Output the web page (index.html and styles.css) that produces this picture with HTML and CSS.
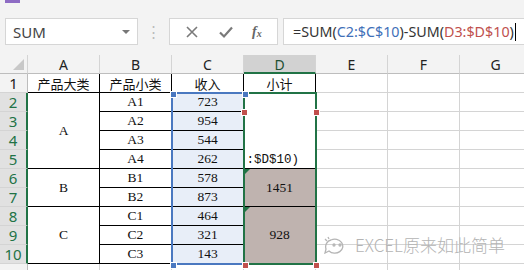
FILE: index.html
```html
<!DOCTYPE html>
<html lang="zh-CN">
<head>
  <meta charset="UTF-8" />
  <title>SUM</title>
  <link rel="stylesheet" href="styles.css">
</head>
<body>
  <div class="app">
    <div class="ribbon-tab"></div>
    <div class="toolbar">
      <div class="namebox">
        <span>SUM</span>
        <span class="caret"></span>
      </div>
      <div class="grip">⋮</div>
      <div class="btns">
        <svg width="14" height="14" viewBox="0 0 14 14"><path d="M2 2 L12 12 M12 2 L2 12" stroke="#7a7a7a" stroke-width="1.6"/></svg>
        <svg width="16" height="14" viewBox="0 0 16 14"><path d="M2 7.5 L6 11.5 L14 2.5" stroke="#7a7a7a" stroke-width="2.2" fill="none"/></svg>
        <span class="fx">f<sub>x</sub></span>
      </div>
      <div class="formula">=SUM(<span class="ref-blue">C2:$C$10</span>)-SUM(<span class="ref-red">D3:$D$10</span>)<span class="cursor"></span></div>
    </div>

    <div class="sheet">
      <div class="corner"><span class="tri"></span></div>
      <div class="colh">A</div>
      <div class="colh">B</div>
      <div class="colh">C</div>
      <div class="colh sel">D</div>
      <div class="colh">E</div>
      <div class="colh">F</div>
      <div class="colh">G</div>

      <div class="rowh">1</div>
      <div class="cell t zh">产品大类</div>
      <div class="cell t zh">产品小类</div>
      <div class="cell t zh">收入</div>
      <div class="cell t zh">小计</div>
      <div class="cell"></div><div class="cell"></div><div class="cell"></div>

      <div class="rowh sel">2</div>
      <div class="cell t mono span4">A</div>
      <div class="cell t mono">A1</div>
      <div class="cell t mono blue">723</div>
      <div class="cell t span4 edit"><span class="overflow">(:$D$10)</span></div>
      <div class="cell"></div><div class="cell"></div><div class="cell"></div>

      <div class="rowh sel">3</div>
      <div class="cell t mono">A2</div>
      <div class="cell t mono blue">954</div>
      <div class="cell"></div><div class="cell"></div><div class="cell"></div>

      <div class="rowh sel">4</div>
      <div class="cell t mono">A3</div>
      <div class="cell t mono blue">544</div>
      <div class="cell"></div><div class="cell"></div><div class="cell"></div>

      <div class="rowh sel">5</div>
      <div class="cell t mono">A4</div>
      <div class="cell t mono blue">262</div>
      <div class="cell"></div><div class="cell"></div><div class="cell"></div>

      <div class="rowh sel">6</div>
      <div class="cell t mono span2">B</div>
      <div class="cell t mono">B1</div>
      <div class="cell t mono blue">578</div>
      <div class="cell t mono span2 taupe"><span class="flag"></span>1451</div>
      <div class="cell"></div><div class="cell"></div><div class="cell"></div>

      <div class="rowh sel">7</div>
      <div class="cell t mono">B2</div>
      <div class="cell t mono blue">873</div>
      <div class="cell"></div><div class="cell"></div><div class="cell"></div>

      <div class="rowh sel">8</div>
      <div class="cell t mono span3">C</div>
      <div class="cell t mono">C1</div>
      <div class="cell t mono blue">464</div>
      <div class="cell t mono span3 taupe"><span class="flag"></span>928</div>
      <div class="cell"></div><div class="cell"></div><div class="cell"></div>

      <div class="rowh sel">9</div>
      <div class="cell t mono">C2</div>
      <div class="cell t mono blue">321</div>
      <div class="cell"></div><div class="cell"></div><div class="cell"></div>

      <div class="rowh sel">10</div>
      <div class="cell t mono">C3</div>
      <div class="cell t mono blue">143</div>
      <div class="cell"></div><div class="cell"></div><div class="cell"></div>

      <div class="rowh"></div>
      <div class="cell"></div><div class="cell"></div><div class="cell"></div><div class="cell"></div>
      <div class="cell"></div><div class="cell"></div><div class="cell"></div>

      <!-- range highlights drawn over the grid -->
      <div class="range range-c"></div>
      <div class="range range-d"></div>
      <span class="handle blue-h" style="left:170px;top:36px"></span>
      <span class="handle blue-h" style="left:242px;top:36px"></span>
      <span class="handle blue-h" style="left:170px;top:207px"></span>
      <span class="handle red-h" style="left:241px;top:54px"></span>
      <span class="handle red-h" style="left:313px;top:54px"></span>
      <span class="handle red-h" style="left:242px;top:207px"></span>
      <span class="handle red-h" style="left:313px;top:207px"></span>

      <div class="watermark">
        <svg width="26" height="18" viewBox="0 0 26 18"><g fill="none" stroke="#b5b5b5" stroke-width="1.3"><path d="M8 4 a8 7 0 1 1 -2 11 l-4 2 l1 -4 a7 7 0 0 1 5 -9"/><circle cx="11" cy="9" r="1"/><circle cx="17" cy="9" r="1"/><path d="M2 3 l2 2 M5 1 l1 2"/></g></svg>
        <span>EXCEL原来如此简单</span>
      </div>
    </div>
  </div>
</body>
</html>
```

FILE: styles.css
```css
body { margin: 0; background: #f3f3f3; font-family: "Noto Sans", "Liberation Sans", sans-serif; }
.app { width: 524px; height: 270px; overflow: hidden; position: relative; }
.ribbon-tab { position: absolute; left: 5px; top: 0; width: 15px; height: 3px; background: #8e6cc4; }

.toolbar { height: 55px; display: flex; align-items: flex-start; padding-top: 18px; box-sizing: border-box; }
.namebox { margin-left: 5px; width: 133px; height: 27px; box-sizing: border-box; background: #fff; border: 1px solid #d6d6d6; display: flex; align-items: center; justify-content: space-between; padding: 0 7px 0 7px; font-size: 15px; color: #444; }
.caret { width: 0; height: 0; border-left: 4px solid transparent; border-right: 4px solid transparent; border-top: 4px solid #777; }
.grip { width: 31px; text-align: center; color: #bbb; font-size: 15px; line-height: 27px; }
.btns { width: 109px; height: 27px; box-sizing: border-box; background: #fff; border: 1px solid #d6d6d6; display: flex; align-items: center; justify-content: space-around; padding: 0 6px; }
.fx { font-family: "Liberation Serif", serif; font-style: italic; font-weight: bold; font-size: 14px; color: #666; }
.fx sub { font-size: 10px; vertical-align: -1px; }
.formula { margin-left: 5px; flex: 1; height: 27px; box-sizing: border-box; background: #fff; border: 1px solid #d6d6d6; border-right: none; padding-left: 9px; font-size: 14.3px; line-height: 25px; color: #333; white-space: nowrap; display: flex; align-items: center; }
.ref-blue { color: #3f6fb8; }
.ref-red { color: #c0504d; }
.cursor { display: inline-block; width: 1px; height: 18px; background: #000; margin-left: 1px; }

.sheet { position: relative; display: grid; grid-template-columns: 28px repeat(7, 72px); grid-auto-rows: 19px; background: #fff; }
.corner { background: #f3f3f3; border-right: 1px solid #d4d4d4; border-bottom: 1px solid #bdbdbd; position: relative; }
.tri { position: absolute; right: 3px; bottom: 3px; width: 0; height: 0; border-left: 11px solid transparent; border-bottom: 11px solid #c8c8c8; }
.colh { background: #f3f3f3; border-right: 1px solid #d4d4d4; border-bottom: 1px solid #bdbdbd; text-align: center; font-size: 14px; line-height: 19px; color: #222; }
.colh.sel { background: #d2d2d2; border-bottom: 2px solid #217346; color: #1e4f33; }
.rowh { background: #f3f3f3; border-right: 1px solid #bdbdbd; border-bottom: 1px solid #d4d4d4; text-align: center; font-size: 15px; line-height: 19px; color: #222; }
.rowh.sel { background: #e1e1e1; border-right: 2px solid #217346; color: #217346; }

.cell { border-right: 1px solid #d4d4d4; border-bottom: 1px solid #d4d4d4; box-sizing: border-box; display: flex; align-items: center; justify-content: center; position: relative; overflow: hidden; }
.cell.t { border-right-color: #000; border-bottom-color: #000; }
.zh { font-family: "Noto Sans CJK SC", sans-serif; font-size: 13px; color: #111; }
.mono { font-family: "Liberation Serif", serif; font-size: 13.5px; color: #111; }
.span4 { grid-row: span 4; }
.span3 { grid-row: span 3; }
.span2 { grid-row: span 2; }
.blue { background: #e8eef8; }
.taupe { background: #bfb3af; }
.edit { align-items: flex-end; justify-content: flex-start; }
.overflow { font-family: "Liberation Mono", monospace; font-size: 12.5px; margin-left: -5px; margin-bottom: 1px; color: #111; white-space: nowrap; }
.flag { position: absolute; left: 0; top: 0; width: 0; height: 0; border-top: 6px solid #217346; border-right: 6px solid transparent; }

.range { position: absolute; box-sizing: border-box; pointer-events: none; }
.range-c { left: 171px; top: 37px; width: 74px; height: 173px; border: 2px solid #4a78c0; }
.range-d { left: 243px; top: 37px; width: 74px; height: 173px; border: 2px solid #217346; }
.handle { position: absolute; width: 5px; height: 5px; border: 1px solid #fff; }
.blue-h { background: #4a78c0; }
.red-h { background: #c0504d; }

.watermark { position: absolute; left: 323px; top: 177px; display: flex; align-items: center; gap: 6px; color: #b4b4b4; font-family: "Noto Sans CJK SC", sans-serif; font-size: 17px; font-weight: 300; }
```
